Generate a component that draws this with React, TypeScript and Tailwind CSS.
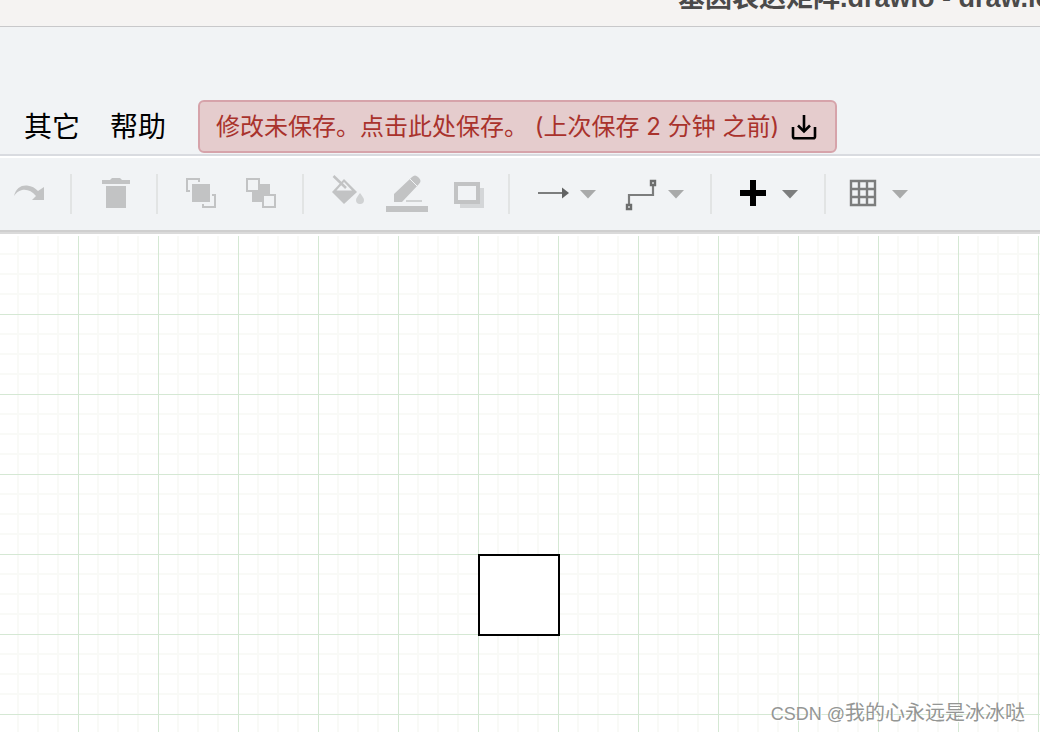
import type { ReactNode } from 'react';

const menus = ['其它', '帮助'];

const Separator = () => <div className="mr-3.5 ml-2.5 h-10 w-0.5 shrink-0 bg-[#e2e4e4]" />;

interface ToolProps {
  label: string;
  children: ReactNode;
  disabled?: boolean;
}

const Tool = ({ label, children, disabled }: ToolProps) => (
  <button type="button" aria-label={label} disabled={disabled} className="shrink-0 text-[#c2c3c4]">
    <svg width="60" height="40" viewBox="0 0 60 40" fill="currentColor">
      {children}
    </svg>
  </button>
);

const DropdownTool = ({ label, children }: ToolProps) => (
  <button type="button" aria-label={label} className="shrink-0 text-[#7c7d7d]">
    <svg width="88" height="40" viewBox="0 0 88 40" fill="currentColor">
      {children}
    </svg>
  </button>
);

const DownloadIcon = () => (
  <svg width="26" height="26" viewBox="0 0 26 26" fill="none" stroke="#000" strokeWidth="2.6" className="shrink-0">
    <path d="M2 13V22.500a1.800 1.800 0 0 0 1.800 1.800H22.200a1.800 1.800 0 0 0 1.800-1.800V13" />
    <path d="M13 1V17" />
    <path d="M7 11.500L13 17.500L19 11.500" />
  </svg>
);

const TitleBar = () => (
  <header className="flex h-[27px] items-end overflow-hidden border-b border-[#c8c8ca] bg-[#f5f3f2] pb-3 pl-[678px]">
    <h1 className="font-['Liberation_Sans','Noto_Sans_CJK_SC',sans-serif] text-[27px] leading-8 font-bold whitespace-nowrap text-[#4b4a4a]">
      基因表达矩阵.drawio - draw.io
    </h1>
  </header>
);

const MenuBar = () => (
  <nav className="flex items-center border-b-2 border-[#d9dbe0] pt-[73px] pb-px pl-2">
    {menus.map((menu) => (
      <button key={menu} type="button" className="shrink-0 px-[15px] pb-1 text-[28px] leading-9 text-black first:pl-4">
        {menu}
      </button>
    ))}
    <button
      type="button"
      className="ml-[17px] flex h-[53px] shrink-0 items-center gap-3 rounded-md border-2 border-[#d6a3aa] bg-[#e5cccd] px-4 pr-[18px] font-['Inter','Noto_Sans_CJK_SC',sans-serif] text-2xl whitespace-pre text-[#a9322c]"
    >
      <span>修改未保存。点击此处保存。 (上次保存 2 分钟 之前)</span>
      <DownloadIcon />
    </button>
  </nav>
);

const Toolbar = () => (
  <div role="toolbar" className="mt-0.5 flex h-[72px] items-center overflow-hidden bg-[#f1f3f5]">
    <Tool label="重做" disabled>
      <path d="M14 22C16 14 21 11 27 11.500C32 12 35 14 38 17L44 13V26H32L36 22C32 17 27 15 22 16C18 17 16 19 14 22Z" />
    </Tool>
    <Separator />
    <Tool label="删除" disabled>
      <path d="M26 4H34L36 6H44V10H16V6H24ZM20 12H40V34H20Z" />
    </Tool>
    <Separator />
    <Tool label="移至最前" disabled>
      <path d="M20 10H38V28H20Z" />
      <path d="M18 17H15V5H27V8M40 21H43V33H31V30" fill="none" stroke="currentColor" strokeWidth="2" />
    </Tool>
    <Tool label="移至最后" disabled>
      <path d="M20 10H38V28H20Z" />
      <path d="M15 5H27V17H15ZM31 21H43V33H31Z" fill="#f1f3f5" stroke="currentColor" strokeWidth="2" />
    </Tool>
    <Separator />
    <Tool label="填充颜色" disabled>
      <path d="M14 18L26 5L39 18L26 30Z" />
      <path d="M18.500 16.500L26 8L34 16.500Z" fill="#f1f3f5" />
      <path d="M15.500 2L28 14" stroke="currentColor" strokeWidth="2.500" />
      <path d="M42 19C44 22 46 24 46 26A4 4 0 0 1 38 26C38 24 40 22 42 19Z" opacity="0.7" />
    </Tool>
    <Tool label="线条颜色" disabled>
      <path d="M16 20L34 3Q37 0 40 3L41 4Q44 7 41 10L24 28H16Z" />
      <path d="M32 5L39 12" stroke="#f1f3f5" />
      <path d="M28 26H44V28H28Z" opacity="0.7" />
      <path d="M8 32H50V38H8Z" />
    </Tool>
    <Tool label="阴影" disabled>
      <path d="M22 14H46V34H22Z" opacity="0.6" />
      <path d="M18 10H40V28H18Z" fill="#f1f3f5" stroke="currentColor" strokeWidth="4" />
    </Tool>
    <Separator />
    <DropdownTool label="连接">
      <path d="M14 18H39V20H14Z" />
      <path d="M38 13.500L45 19L38 24.500Z" fill="#626363" />
      <path d="M56 16H72L64 24.500Z" fill="#a9aaaa" />
    </DropdownTool>
    <DropdownTool label="航点">
      <path d="M41 12V21H17V30" fill="none" stroke="currentColor" strokeWidth="2.200" />
      <path d="M39 7H43V11H39ZM15 31H19V35H15Z" fill="none" stroke="#6c6d6d" strokeWidth="2.400" />
      <path d="M56 16H72L64 24.500Z" fill="#a9aaaa" />
    </DropdownTool>
    <Separator />
    <DropdownTool label="插入">
      <path d="M24 6H30V16H40V22H30V32H24V22H14V16H24Z" fill="#000" />
      <path d="M56 16H72L64 24.500Z" fill="#7d7e7e" />
    </DropdownTool>
    <Separator />
    <DropdownTool label="表格">
      <path
        d="M11 7H35V31H11ZM19 7V31M27 7V31M11 15H35M11 23H35"
        fill="none"
        stroke="currentColor"
        strokeWidth="2.400"
      />
      <path d="M52 16H68L60 24.500Z" fill="#a9aaaa" />
    </DropdownTool>
  </div>
);

const Canvas = () => (
  <main className="relative flex-1 overflow-hidden bg-white">
    <svg width="100%" height="100%" className="absolute inset-0">
      <defs>
        <pattern id="grid" width="80" height="80" patternUnits="userSpaceOnUse">
          <path d="M18 0V80M38 0V80M58 0V80M0 18H80M0 38H80M0 58H80" stroke="#f9faf7" strokeWidth="2" />
          <path d="M78 0H79V80H78ZM0 78H80V79H0Z" fill="#d5e8d4" />
        </pattern>
      </defs>
      <rect width="100%" height="100%" fill="url(#grid)" />
    </svg>
    <div className="absolute top-[318px] left-[478px] size-[82px] border-2 border-black bg-white" />
    <p className="absolute right-[15px] bottom-0.5 font-['Liberation_Sans','Noto_Sans_CJK_SC',sans-serif] text-xl leading-8 whitespace-nowrap text-[#949694] [text-shadow:1px_1px_0_#fff]">
      <span className="text-lg leading-8">CSDN @</span>我的心永远是冰冰哒
    </p>
  </main>
);

export default function App() {
  return (
    <div className="flex min-h-screen flex-col overflow-hidden bg-white font-['Noto_Sans_CJK_SC',sans-serif]">
      <TitleBar />
      <div className="bg-[#f1f3f5]">
        <MenuBar />
      </div>
      <Toolbar />
      <div className="mb-0.5 h-1 border-t-2 border-[#cfcfcf] bg-[#dadada]" />
      <Canvas />
    </div>
  );
}
